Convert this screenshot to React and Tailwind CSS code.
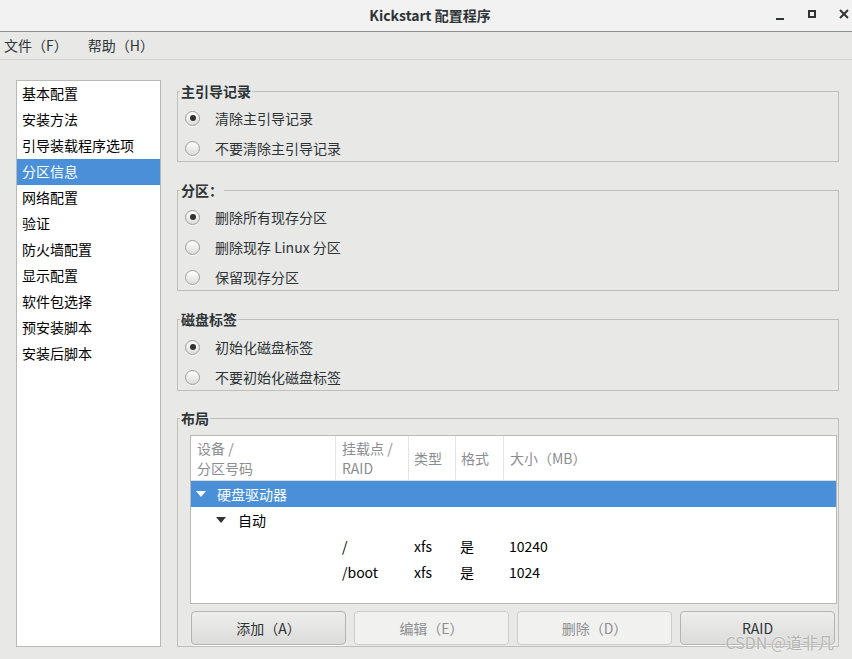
import React from 'react'

const font = "font-['Noto_Sans_CJK_SC','Noto_Sans',sans-serif]"

const navItems = ['基本配置', '安装方法', '引导装载程序选项', '分区信息', '网络配置', '验证', '防火墙配置', '显示配置', '软件包选择', '预安装脚本', '安装后脚本']

const Radio = ({ checked, label }) => (
  <div className="flex items-center h-[26px] pl-[7px]">
    <span className="w-[15px] h-[15px] rounded-full border border-[#9c9c9a] bg-gradient-to-b from-white to-[#dcdcda] flex items-center justify-center shadow-[0_1px_0_#fff]">
      {checked && <span className="w-[6px] h-[6px] rounded-full bg-[#2e3436]" />}
    </span>
    <span className="ml-[15px] text-[14px] text-[#2e3436]">{label}</span>
  </div>
)

const Group = ({ title, children, className = '' }) => (
  <fieldset className={`border border-[#bebebb] w-[662px] ${className}`}>
    <legend className="ml-[2px] px-[1px] text-[14px] leading-[18px] font-bold text-[#2e3436]">{title}</legend>
    {children}
  </fieldset>
)

const Tri = () => (
  <svg width="10" height="6" viewBox="0 0 10 6" className="shrink-0"><path d="M0 0h10L5 6z" fill="currentColor" /></svg>
)

const Btn = ({ children, disabled }) => (
  <button className={`w-[155px] h-[34px] rounded-[4px] border text-[14px] ${disabled ? 'border-[#cdcdca] bg-[#f1f1f0] text-[#8c8f90]' : 'border-[#b4b4b1] bg-gradient-to-b from-[#ededec] to-[#dcdcda] text-[#2e3436] shadow-[0_1px_0_#fff]'}`}>
    {children}
  </button>
)

const App = () => {
  return (
    <div className={`w-[852px] h-[659px] bg-[#e8e8e7] flex flex-col relative overflow-hidden ${font}`}>
      {/* title bar */}
      <div className="h-[32px] shrink-0 bg-[#f2f2f2] border-b border-[#8c8c8a] flex items-center relative">
        <div className="flex-1 text-center text-[14px] font-bold text-[#2e3436] pl-[8px]">Kickstart 配置程序</div>
        <div className="absolute right-[3px] top-0 h-[32px] flex items-center gap-[22px] text-[#2e3436]">
          <svg width="10" height="10" viewBox="0 0 10 10"><rect x="1" y="7" width="8" height="2" fill="currentColor" /></svg>
          <svg width="10" height="10" viewBox="0 0 10 10" className="-mt-[4px]"><rect x="2" y="2" width="6" height="6" fill="none" stroke="currentColor" strokeWidth="2" /></svg>
          <svg width="10" height="10" viewBox="0 0 10 10" className="-mt-[4px]"><path d="M1 1l8 8M9 1l-8 8" stroke="currentColor" strokeWidth="2" /></svg>
        </div>
      </div>
      {/* menu */}
      <div className="h-[28px] shrink-0 border-b border-[#d2d2d0] flex items-center text-[14px] text-[#2e3436]">
        <span className="ml-[4px]">文件（F）</span>
        <span className="ml-[20px]">帮助（H）</span>
      </div>

      <div className="flex flex-1 pl-[16px]">
        <div className="mt-[20px] w-[145px] h-[567px] bg-white border border-[#b9b9b6]">
          {navItems.map((n) => (
            <div key={n} className={`h-[26px] flex items-center pl-[5px] pb-[1px] text-[14px] ${n === '分区信息' ? 'bg-[#4a90d9] text-white' : 'text-[#000]'}`}>{n}</div>
          ))}
        </div>

        <div className="ml-[16px] mt-[22px] flex flex-col">
          <Group title="主引导记录" className="h-[80px]">
            <div className="pt-[5px] flex flex-col gap-[4px]">
              <Radio checked label="清除主引导记录" />
              <Radio label="不要清除主引导记录" />
            </div>
          </Group>

          <Group title="分区：" className="mt-[19px] h-[110px]">
            <div className="pt-[5px] flex flex-col gap-[4px]">
              <Radio checked label="删除所有现存分区" />
              <Radio label="删除现存  Linux 分区" />
              <Radio label="保留现存分区" />
            </div>
          </Group>

          <Group title="磁盘标签" className="mt-[19px] h-[81px]">
            <div className="pt-[6px] flex flex-col gap-[4px]">
              <Radio checked label="初始化磁盘标签" />
              <Radio label="不要初始化磁盘标签" />
            </div>
          </Group>

          <Group title="布局" className="mt-[18px] h-[238px]">
            <div className="pt-[8px] pl-[12px] pr-[1px]">
              <div className="h-[169px] bg-white border border-[#b9b9b6] text-[14px]">
                <div className="h-[45px] flex border-b border-[#dcdcda] text-[#8b8e8f] leading-[20px]">
                  <div className="w-[145px] border-r border-[#e4e4e2] pl-[6px] flex flex-col justify-center">
                    <span>设备 /</span><span>分区号码</span>
                  </div>
                  <div className="w-[73px] border-r border-[#e4e4e2] pl-[6px] flex flex-col justify-center">
                    <span>挂载点 /</span><span>RAID</span>
                  </div>
                  <div className="w-[47px] border-r border-[#e4e4e2] pl-[5px] flex items-center">类型</div>
                  <div className="w-[48px] border-r border-[#e4e4e2] pl-[5px] flex items-center">格式</div>
                  <div className="flex-1 pl-[6px] flex items-center">大小（MB）</div>
                </div>
                <div className="h-[26px] bg-[#4a90d9] text-white flex items-center pl-[5px]">
                  <span className="text-white"><Tri /></span>
                  <span className="ml-[11px]">硬盘驱动器</span>
                </div>
                <div className="h-[26px] flex items-center pl-[25px] text-[#000]">
                  <span className="text-[#2e3436]"><Tri /></span>
                  <span className="ml-[12px]">自动</span>
                </div>
                {[['/', 'xfs', '是', '10240'], ['/boot', 'xfs', '是', '1024']].map((r) => (
                  <div key={r[0]} className="h-[26px] flex items-center text-[#000]">
                    <span className="w-[146px]" />
                    <span className="w-[72px] pl-[5px]">{r[0]}</span>
                    <span className="w-[47px] pl-[5px]">{r[1]}</span>
                    <span className="w-[48px] pl-[4px]">{r[2]}</span>
                    <span className="pl-[5px]">{r[3]}</span>
                  </div>
                ))}
              </div>
              <div className="mt-[7px] flex gap-[8px] pl-[1px]">
                <Btn>添加（A）</Btn>
                <Btn disabled>编辑（E）</Btn>
                <Btn disabled>删除（D）</Btn>
                <Btn>RAID</Btn>
              </div>
            </div>
          </Group>
        </div>
      </div>

      <div className="absolute right-[18px] bottom-[7px] text-[16px] leading-[20px] text-[#b4b4b2] [text-shadow:0_0_2px_#fff]">CSDN @道非凡</div>
    </div>
  )
}

export default App
